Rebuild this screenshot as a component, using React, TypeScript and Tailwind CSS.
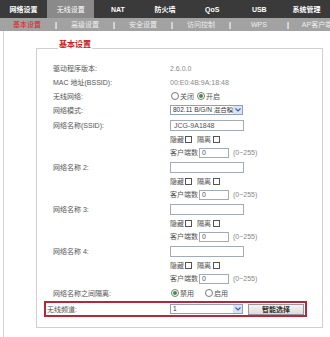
import React from "react";

const tabs = ["网络设置", "无线设置", "NAT", "防火墙", "QoS", "USB", "系统管理"];
const subTabs = ["基本设置", "高级设置", "安全设置", "访问控制", "WPS", "AP客户端"];
const ssids = [
  { label: "网络名称(SSID):", value: "JCG-9A1848" },
  { label: "网络名称 2:", value: "" },
  { label: "网络名称 3:", value: "" },
  { label: "网络名称 4:", value: "" },
];

function Radio({ checked }: { checked?: boolean }) {
  return (
    <span className="w-[8px] h-[8px] rounded-full border border-[#7a7a7a] bg-white flex items-center justify-center shrink-0">
      {checked && <span className="w-[4px] h-[4px] rounded-full bg-[#3f8f3f]" />}
    </span>
  );
}

function Check() {
  return <span className="block w-[7px] h-[7px] border border-[#555] bg-white shrink-0" />;
}

function Select({ value }: { value: string }) {
  return (
    <div className="w-[73px] h-[10px] border border-[#8fa0b8] bg-white flex items-center overflow-hidden">
      <span className="pl-[2px] text-[6.5px] leading-none text-[#333] whitespace-nowrap overflow-hidden flex-1">
        {value}
      </span>
      <span className="w-[9px] h-full bg-[#d8e3f3] flex items-center justify-center shrink-0">
        <svg width="6" height="4" viewBox="0 0 6 4">
          <path d="M0.5 0.5 L3 3 L5.5 0.5" fill="none" stroke="#3d64a8" strokeWidth="1.2" />
        </svg>
      </span>
    </div>
  );
}

function Row({ label, children, h = "h-[14px]" }: { label?: string; children?: React.ReactNode; h?: string }) {
  return (
    <div className={`flex items-center ${h}`}>
      <span className="w-[117px] shrink-0 text-[#555]">{label}</span>
      <div className="flex items-center">{children}</div>
    </div>
  );
}

export default function App() {
  return (
    <div className="w-[330px] h-[337px] bg-white overflow-hidden font-['Liberation_Sans','Noto_Sans_CJK_SC',sans-serif] text-[7px] leading-none">
      <div className="grid grid-cols-7 h-[18px] bg-[#3a3a3a]">
        {tabs.map((t, i) => (
          <div
            key={t}
            className={`flex items-center justify-center font-bold text-white ${i === 1 ? "bg-[#8a8a8a] font-normal" : ""}`}
          >
            {t}
          </div>
        ))}
      </div>
      <div className="flex items-center h-[13px] bg-[#a2a2a2] pl-[1px] whitespace-nowrap">
        {subTabs.map((t, i) => (
          <React.Fragment key={t}>
            {i > 0 && <span className="w-[6px] shrink-0 text-center text-white font-bold">|</span>}
            <span className={`w-[52px] shrink-0 text-center ${i === 0 ? "text-[#e0201e]" : "text-[#eeeeee]"}`}>{t}</span>
          </React.Fragment>
        ))}
      </div>
      <div className="pl-[3px] h-[306px]">
        <div className="h-full border-l border-[#d4d4d4] pl-[32px] pt-[11px]">
          <fieldset className="w-[287px] h-[286px] border border-[#cfcfcf] pl-[16px] pt-[7px]">
            <legend className="ml-[5px] px-[1px] text-[8px] leading-[12px] font-bold text-[#c8201e] -translate-y-[3px]">
              基本设置
            </legend>
            <Row label="驱动程序版本:">
              <span className="text-[#888]">2.6.0.0</span>
            </Row>
            <Row label="MAC 地址(BSSID):">
              <span className="text-[#888]">00:E0:4B:9A:18:48</span>
            </Row>
            <Row label="无线网络:">
              <span className="ml-[1px]"><Radio /></span>
              <span className="ml-[1px] text-[#555]">关闭</span>
              <span className="ml-[3px]"><Radio checked /></span>
              <span className="ml-[1px] text-[#555]">开启</span>
            </Row>
            <Row label="网络模式:">
              <Select value="802.11 B/G/N 混合模式" />
            </Row>
            {ssids.map((s) => (
              <div key={s.label}>
                <Row label={s.label} h="h-[16px]">
                  <div className="w-[74px] h-[11px] border border-[#a3abb5] bg-white flex items-center pl-[3px] text-[#555]">
                    {s.value}
                  </div>
                </Row>
                <Row h="h-[13px]">
                  <span className="text-[#555]">隐藏</span>
                  <span className="ml-[1px] flex"><Check /></span>
                  <span className="ml-[5px] text-[#555]">隔离</span>
                  <span className="ml-[2px] flex"><Check /></span>
                </Row>
                <Row h="h-[13px]">
                  <span className="text-[#555]">客户端数</span>
                  <div className="ml-[1px] w-[30px] h-[10px] border border-[#a3abb5] bg-white flex items-center pl-[2px] text-[#555]">
                    0
                  </div>
                  <span className="ml-[4px] text-[#888]">(0~255)</span>
                </Row>
              </div>
            ))}
            <Row label="网络名称之间隔离:" h="h-[16px]">
              <span className="ml-[1px]"><Radio checked /></span>
              <span className="ml-[1px] text-[#555]">禁用</span>
              <span className="ml-[11px]"><Radio /></span>
              <span className="ml-[1px] text-[#555]">启用</span>
            </Row>
            <div className="-ml-[9px] w-[263px] h-[16px] border-2 border-[#b3283a] flex items-center">
              <span className="w-[124px] shrink-0 pl-[1px] text-[#555]">无线频道:</span>
              <Select value="1" />
              <button className="ml-[5px] w-[56px] h-[11px] border border-[#9a9a9a] bg-gradient-to-b from-[#f4f4f4] to-[#dcdcdc] text-[#333] text-[7px] leading-none font-bold">
                智能选择
              </button>
            </div>
          </fieldset>
        </div>
      </div>
    </div>
  );
}
